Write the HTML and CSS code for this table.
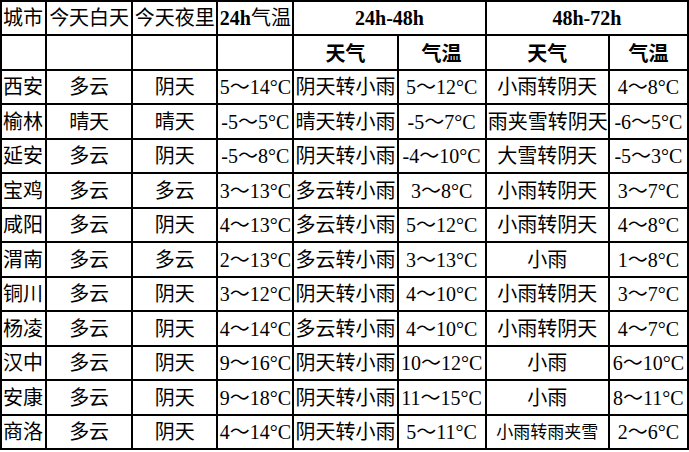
FILE: index.html
```html
<!DOCTYPE html>
<html lang="zh">
<head>
<meta charset="utf-8">
<link rel="stylesheet" href="styles.css">
</head>
<body>
<table class="wx">
<colgroup>
<col class="c1"><col class="c2"><col class="c3"><col class="c4"><col class="c5"><col class="c6"><col class="c7"><col class="c8">
</colgroup>
<tr class="h1">
<td class="left">城市</td><td>今天白天</td><td>今天夜里</td><td><b>24h</b>气温</td><td colspan="2"><b>24h-48h</b></td><td colspan="2"><b>48h-72h</b></td>
</tr>
<tr class="h2">
<td></td><td></td><td></td><td></td><th>天气</th><th>气温</th><th>天气</th><th>气温</th>
</tr>
<tr class="a"><td class="left">西安</td><td>多云</td><td>阴天</td><td>5～14°C</td><td class="left">阴天转小雨</td><td>5～12°C</td><td>小雨转阴天</td><td>4～8°C</td></tr>
<tr class="b"><td class="left">榆林</td><td>晴天</td><td>晴天</td><td>-5～5°C</td><td class="left">晴天转小雨</td><td>-5～7°C</td><td>雨夹雪转阴天</td><td>-6～5°C</td></tr>
<tr class="a"><td class="left">延安</td><td>多云</td><td>阴天</td><td>-5～8°C</td><td class="left">阴天转小雨</td><td>-4～10°C</td><td>大雪转阴天</td><td>-5～3°C</td></tr>
<tr class="b"><td class="left">宝鸡</td><td>多云</td><td>多云</td><td>3～13°C</td><td class="left">多云转小雨</td><td>3～8°C</td><td>小雨转阴天</td><td>3～7°C</td></tr>
<tr class="a"><td class="left">咸阳</td><td>多云</td><td>阴天</td><td>4～13°C</td><td class="left">多云转小雨</td><td>5～12°C</td><td>小雨转阴天</td><td>4～8°C</td></tr>
<tr class="b"><td class="left">渭南</td><td>多云</td><td>多云</td><td>2～13°C</td><td class="left">多云转小雨</td><td>3～13°C</td><td>小雨</td><td>1～8°C</td></tr>
<tr class="a"><td class="left">铜川</td><td>多云</td><td>阴天</td><td>3～12°C</td><td class="left">阴天转小雨</td><td>4～10°C</td><td>小雨转阴天</td><td>3～7°C</td></tr>
<tr class="b"><td class="left">杨凌</td><td>多云</td><td>阴天</td><td>4～14°C</td><td class="left">多云转小雨</td><td>4～10°C</td><td>小雨转阴天</td><td>4～7°C</td></tr>
<tr class="a"><td class="left">汉中</td><td>多云</td><td>阴天</td><td>9～16°C</td><td class="left">阴天转小雨</td><td>10～12°C</td><td>小雨</td><td>6～10°C</td></tr>
<tr class="b"><td class="left">安康</td><td>多云</td><td>阴天</td><td>9～18°C</td><td class="left">阴天转小雨</td><td>11～15°C</td><td>小雨</td><td>8～11°C</td></tr>
<tr class="a"><td class="left">商洛</td><td>多云</td><td>阴天</td><td>4～14°C</td><td class="left">阴天转小雨</td><td>5～11°C</td><td class="small">小雨转雨夹雪</td><td>2～6°C</td></tr>
</table>
</body>
</html>
```
FILE: styles.css
```css
html, body {
  margin: 0;
  padding: 0;
  background: #fff;
}
.wx {
  border-collapse: collapse;
  table-layout: fixed;
  width: 689px;
  font-family: "Liberation Serif", "Noto Sans CJK SC", serif;
  font-size: 20px;
  line-height: 1;
  color: #000;
}
.c1 { width: 45px; }
.c2 { width: 86px; }
.c3 { width: 85px; }
.c4 { width: 76px; }
.c5 { width: 104px; }
.c6 { width: 88px; }
.c7 { width: 123px; }
.c8 { width: 79px; }
.wx td, .wx th {
  border: 2px solid #000;
  padding: 0 1px;
  text-align: center;
  vertical-align: middle;
  white-space: nowrap;
  overflow: hidden;
}
.wx th {
  font-weight: bold;
  font-family: "Noto Sans CJK SC", sans-serif;
}
.wx b {
  font-weight: bold;
}
.wx td.left {
  text-align: left;
}
.wx td.small {
  font-size: 17px;
}
.h1 { height: 34px; }
.h2 { height: 35px; }
.a { height: 34px; }
.b { height: 35px; }
```
